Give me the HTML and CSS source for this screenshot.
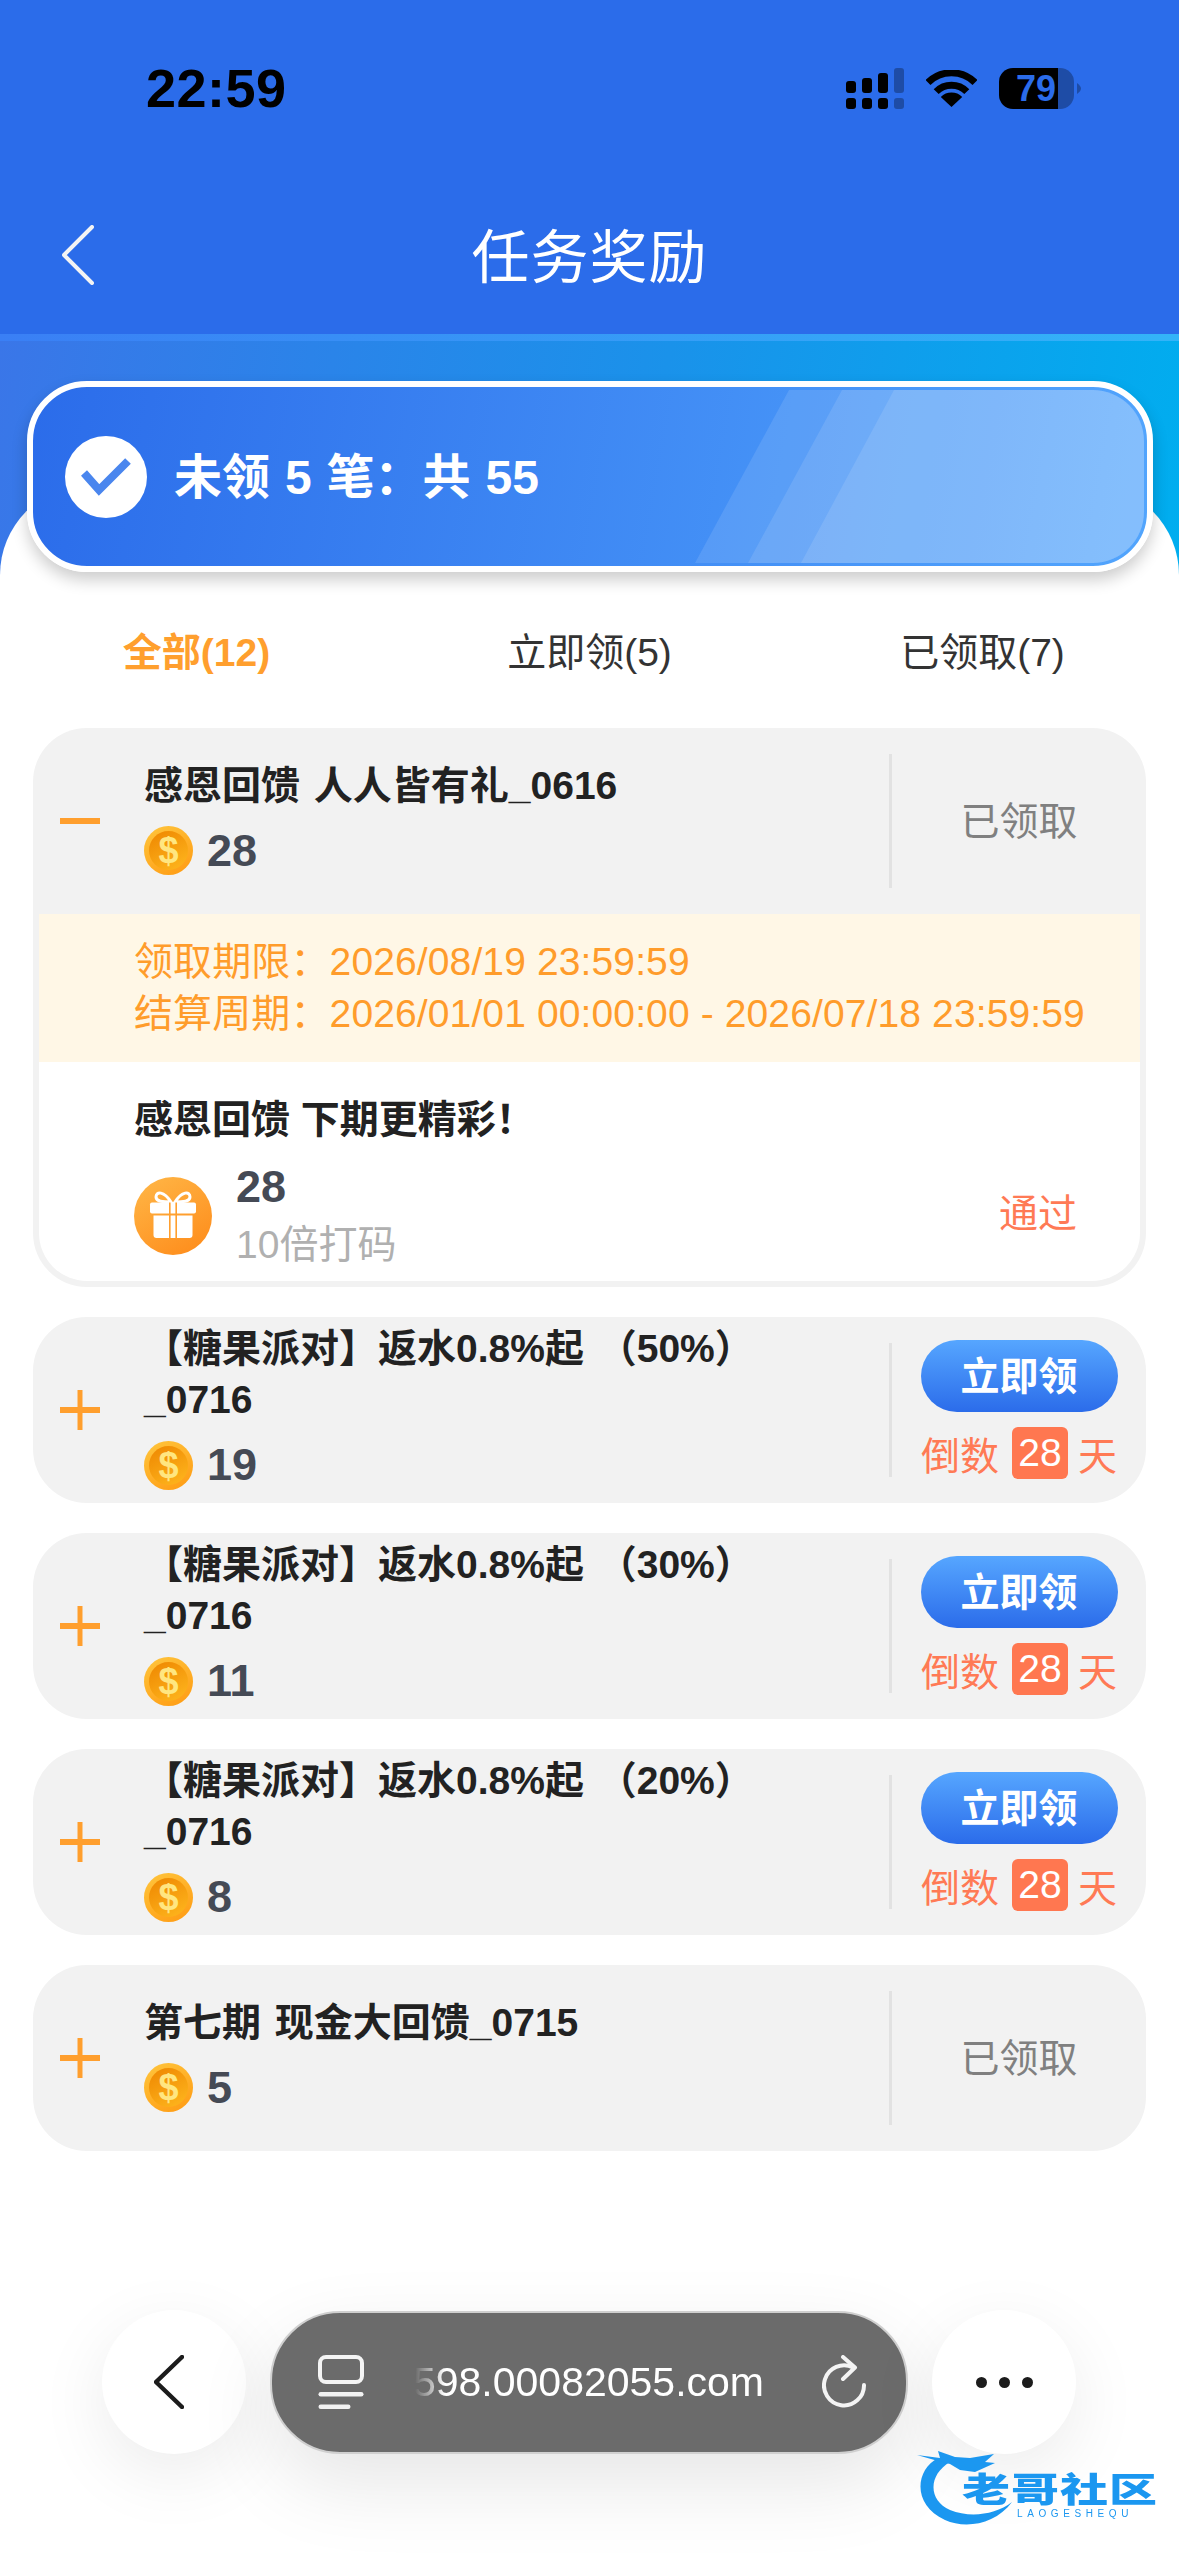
FILE: index.html
```html
<!DOCTYPE html>
<html lang="zh-CN">
<head>
  <meta charset="UTF-8" />
  <meta name="viewport" content="width=device-width, initial-scale=1.0"/>
  <title>任务奖励</title>
  <link rel="stylesheet" href="styles.css">
</head>
<body>

  <!-- shared gradients and the plus icon -->
  <svg class="sprite" aria-hidden="true">
    <defs>
      <linearGradient id="gift-bg" x1="0.2" y1="0" x2="0.8" y2="1">
        <stop offset="0" stop-color="#ffb444"/>
        <stop offset="1" stop-color="#fe8d1c"/>
      </linearGradient>
    </defs>
    <symbol id="plus" viewBox="0 0 40 40">
      <rect x="0" y="17" width="40" height="6" fill="#ff9f2e"/>
      <rect x="17.5" y="0" width="5" height="40" fill="#ff9f2e"/>
    </symbol>
  </svg>

  <div class="page">

    <header class="top">
      <div class="status">
        <span class="time">22:59</span>
        <div class="status-icons">
          <svg width="58" height="41" viewBox="0 0 58 41">
            <rect x="0" y="13" width="10" height="12" rx="3"/>
            <rect x="16" y="10" width="10" height="15" rx="3"/>
            <rect x="32" y="5" width="10" height="20" rx="3"/>
            <rect x="48" y="0" width="10" height="25" rx="3" class="dim"/>
            <rect x="0" y="30" width="10" height="11" rx="3"/>
            <rect x="16" y="30" width="10" height="11" rx="3"/>
            <rect x="32" y="30" width="10" height="11" rx="3"/>
            <rect x="48" y="30" width="10" height="11" rx="3" class="dim"/>
          </svg>
          <svg width="51" height="37" viewBox="0 0 51 37">
            <path d="M2 12.5 A33.4 33.4 0 0 1 49 12.5" class="wifi-arc"/>
            <path d="M10.2 21.6 A21.5 21.5 0 0 1 40.8 21.6" class="wifi-arc"/>
            <path d="M25.5 37 L14.8 27 A15 15 0 0 1 36.2 27 Z"/>
          </svg>
          <svg width="82" height="41" viewBox="0 0 82 41">
            <path d="M59 0 H61 A14 14 0 0 1 75 14 V27 A14 14 0 0 1 61 41 H59 Z" class="dim"/>
            <path d="M59 0 H14 A14 14 0 0 0 0 14 V27 A14 14 0 0 0 14 41 H59 Z"/>
            <path d="M78 15 Q82 18 82 20.5 Q82 23 78 26 Z" class="dim"/>
            <text x="37" y="33" text-anchor="middle" class="battery-num">79</text>
          </svg>
        </div>
      </div>
      <div class="nav">
        <svg class="nav-back" width="32" height="60" viewBox="0 0 32 60">
          <path d="M30 2 L2 30 L30 58" class="line-white"/>
        </svg>
        <h1>任务奖励</h1>
        <span></span>
      </div>
    </header>
    <div class="strip"></div>

    <div class="content">
      <div class="banner">
        <div class="banner-shine">
          <svg width="1108" height="173" viewBox="0 0 1108 173">
            <polygon points="753,0 1108,0 1108,173 659,173"/>
            <polygon points="806,0 1108,0 1108,173 712,173"/>
            <polygon points="858,0 1108,0 1108,173 765,173"/>
          </svg>
        </div>
        <span class="banner-check">
          <svg width="50" height="38" viewBox="0 0 50 38">
            <path d="M3 15 L18 32 L47 3" class="line-check"/>
          </svg>
        </span>
        <span class="banner-text">未领 5 笔：共 55</span>
      </div>

      <div class="sheet">
        <div class="tabs">
          <button class="active">全部(12)</button>
          <button>立即领(5)</button>
          <button>已领取(7)</button>
        </div>

        <div class="list">

          <div class="card">
            <div class="row">
              <svg class="toggle" width="40" height="40" viewBox="0 0 40 40"><rect x="0" y="17" width="40" height="6" fill="#ff9f2e"/></svg>
              <div class="info">
                <div class="name">感恩回馈 人人皆有礼_0616</div>
                <div class="amount"><span class="coin">$</span>28</div>
              </div>
              <div class="side"><span class="claimed">已领取</span></div>
            </div>
            <div class="detail">
              <div class="period">
                <div>领取期限：2026/08/19 23:59:59</div>
                <div>结算周期：2026/01/01 00:00:00 - 2026/07/18 23:59:59</div>
              </div>
              <div class="detail-body">
                <div class="detail-name">感恩回馈 下期更精彩！</div>
                <div class="reward">
                  <svg class="gift" width="78" height="78" viewBox="0 0 78 78">
                    <circle cx="39" cy="39" r="39" fill="url(#gift-bg)"/>
                    <path d="M37 25 C30 14 22 14 22 20 C22 25 30 25 37 25 Z M41 25 C48 14 56 14 56 20 C56 25 48 25 41 25 Z" class="bow"/>
                    <rect x="16" y="25.5" width="46" height="11" rx="2" fill="#fff"/>
                    <path d="M19.5 38.5 H58.5 V58 A3 3 0 0 1 55.5 61 H22.5 A3 3 0 0 1 19.5 58 Z" fill="#fff"/>
                    <rect x="35" y="25.5" width="1.6" height="36" fill="#ff9f2e"/>
                    <rect x="41.4" y="25.5" width="1.6" height="36" fill="#ff9f2e"/>
                  </svg>
                  <div class="reward-text">
                    <div class="reward-num">28</div>
                    <div class="reward-sub">10倍打码</div>
                  </div>
                  <span class="passed">通过</span>
                </div>
              </div>
            </div>
          </div>

          <div class="card">
            <div class="row">
              <svg class="toggle" width="40" height="40"><use href="#plus"/></svg>
              <div class="info">
                <div class="name">【糖果派对】返水0.8%起 （50%）_0716</div>
                <div class="amount"><span class="coin">$</span>19</div>
              </div>
              <div class="side">
                <button class="claim">立即领</button>
                <div class="countdown">倒数<span class="days">28</span>天</div>
              </div>
            </div>
          </div>

          <div class="card">
            <div class="row">
              <svg class="toggle" width="40" height="40"><use href="#plus"/></svg>
              <div class="info">
                <div class="name">【糖果派对】返水0.8%起 （30%）_0716</div>
                <div class="amount"><span class="coin">$</span>11</div>
              </div>
              <div class="side">
                <button class="claim">立即领</button>
                <div class="countdown">倒数<span class="days">28</span>天</div>
              </div>
            </div>
          </div>

          <div class="card">
            <div class="row">
              <svg class="toggle" width="40" height="40"><use href="#plus"/></svg>
              <div class="info">
                <div class="name">【糖果派对】返水0.8%起 （20%）_0716</div>
                <div class="amount"><span class="coin">$</span>8</div>
              </div>
              <div class="side">
                <button class="claim">立即领</button>
                <div class="countdown">倒数<span class="days">28</span>天</div>
              </div>
            </div>
          </div>

          <div class="card">
            <div class="row">
              <svg class="toggle" width="40" height="40"><use href="#plus"/></svg>
              <div class="info">
                <div class="name">第七期 现金大回馈_0715</div>
                <div class="amount"><span class="coin">$</span>5</div>
              </div>
              <div class="side"><span class="claimed">已领取</span></div>
            </div>
          </div>

        </div>
      </div>
    </div>

    <!-- browser toolbar floats over the page -->
    <div class="browser">
      <div class="round">
        <svg class="round-back" width="30" height="54" viewBox="0 0 30 54">
          <path d="M28 2 L2 27 L28 52" class="line-dark"/>
        </svg>
      </div>
      <div class="pill">
        <svg width="46" height="54" viewBox="0 0 46 54">
          <rect x="2" y="2" width="42" height="25" rx="6" class="line-white"/>
          <rect x="0.5" y="37" width="45" height="4.5" rx="2.2" fill="#f2f2f2"/>
          <rect x="0.5" y="49.5" width="32" height="4.5" rx="2.2" fill="#f2f2f2"/>
        </svg>
        <div class="url">598.00082055.com</div>
        <svg width="45" height="54" viewBox="0 0 45 54">
          <path d="M31 12.5 A20 20 0 1 0 42 30" class="line-white"/>
          <path d="M21 2 L33 12.5 L21 24" class="line-white"/>
        </svg>
      </div>
      <div class="round">
        <span class="dots"><i></i><i></i><i></i></span>
      </div>
    </div>

    <div class="watermark">
      <svg width="120" height="100" viewBox="0 0 120 100">
        <path d="M38 28 C15 40 12 75 45 90 C65 99 95 95 112 72 C95 85 70 88 50 80 C28 70 28 45 50 32 Z" fill="#1b97f0"/>
        <path d="M17 25 L40 28 L38 21 L55 27 L70 28 L94 24 L85 32 L95 33 L75 42 L60 40 L50 34 L38 31 Z" fill="#1b97f0"/>
      </svg>
      <span class="wm-name">老哥社区</span>
      <span class="wm-sub">LAOGESHEQU</span>
    </div>

  </div>
</body>
</html>
```

FILE: styles.css
```css
* {
  box-sizing: border-box;
}

body {
  margin: 0;
  background: #fff;
  font-family: "Liberation Sans", "Noto Sans CJK SC", sans-serif;
  color: #222;
}

.sprite {
  position: absolute;
  width: 0;
  height: 0;
}

.page {
  position: relative;
  width: 1179px;
  height: 2556px;
  overflow: hidden;
  display: flex;
  flex-direction: column;
}

/* header */

.top {
  height: 334px;
  background: #2b6cea;
  color: #fff;
}

.status {
  height: 176px;
  padding: 0 98px 0 146px;
  display: flex;
  align-items: center;
  justify-content: space-between;
}

.time {
  font-size: 54px;
  font-weight: bold;
  letter-spacing: 0.5px;
  color: #000;
}

.status-icons {
  display: flex;
  align-items: center;
  gap: 22px;
}

.dim {
  fill: #1e4ca6;
}

.wifi-arc {
  fill: none;
  stroke: #000;
  stroke-width: 7;
}

.battery-num {
  font-family: "Liberation Sans", sans-serif;
  font-size: 36px;
  font-weight: bold;
  fill: #2b6cea;
}

.nav {
  height: 158px;
  display: grid;
  grid-template-columns: 1fr auto 1fr;
  align-items: center;
}

.nav-back {
  margin-left: 62px;
}

.nav h1 {
  margin: 0;
  padding-bottom: 5px;
  font-size: 58px;
  font-weight: normal;
  letter-spacing: 1px;
}

.line-white {
  fill: none;
  stroke: #f4f4f4;
  stroke-width: 4;
  stroke-linecap: round;
  stroke-linejoin: round;
}

.line-dark {
  fill: none;
  stroke: #1c1c1c;
  stroke-width: 4.5;
  stroke-linecap: round;
  stroke-linejoin: round;
}

.strip {
  height: 7px;
  background: linear-gradient(90deg, #3a7ff5, #33b4f8);
}

/* banner and white sheet */

.content {
  flex: 1;
  padding-top: 40px;
  background: linear-gradient(100deg, #3a76e8 0%, #1a92ea 55%, #00aeef 100%) no-repeat;
  background-size: 100% 240px;
}

.banner {
  position: relative;
  z-index: 1;
  height: 191px;
  margin: 0 26px 0 27px;
  padding-left: 32px;
  display: flex;
  align-items: center;
  gap: 27px;
  border: 6px solid #fff;
  border-radius: 60px;
  background: linear-gradient(100deg, #2b6cea 0%, #52a5fd 100%);
  box-shadow: 0 8px 16px rgba(0, 0, 0, 0.2);
  color: #fff;
}

.banner-shine {
  position: absolute;
  top: 3px;
  right: 3px;
  bottom: 3px;
  left: 3px;
  border-radius: 51px;
  overflow: hidden;
}

.banner-shine svg {
  display: block;
}

.banner-shine polygon {
  fill: #fff;
  opacity: 0.11;
}

.banner-check {
  position: relative;
  width: 82px;
  height: 82px;
  border-radius: 50%;
  background: #fff;
  display: flex;
  align-items: center;
  justify-content: center;
}

.line-check {
  fill: none;
  stroke: #4a86ee;
  stroke-width: 8;
}

.banner-text {
  position: relative;
  padding-bottom: 8px;
  font-size: 48px;
  font-weight: bold;
  word-spacing: 1.6px;
}

.sheet {
  margin-top: -87px;
  padding-top: 87px;
  background: #fff;
  border-radius: 90px 90px 0 0;
}

.tabs {
  height: 156px;
  padding-top: 4px;
  display: grid;
  grid-template-columns: 1fr 1fr 1fr;
  align-items: center;
}

.tabs button {
  border: none;
  background: none;
  padding: 0 0 6px;
  font: inherit;
  font-size: 39px;
  color: #333;
}

.tabs button.active {
  color: #ff9f2e;
  font-weight: bold;
}

/* task cards */

.list {
  padding: 0 33px;
  display: flex;
  flex-direction: column;
  gap: 30px;
}

.card {
  border-radius: 54px;
  background: #f2f2f2;
  overflow: hidden;
}

.row {
  height: 186px;
  display: flex;
  align-items: center;
}

.toggle {
  flex: none;
  margin: 0 44px 0 27px;
}

.info {
  flex: 1;
  padding: 0 60px 7px 0;
  display: flex;
  flex-direction: column;
  gap: 15px;
}

.name {
  font-size: 39px;
  line-height: 51px;
  font-weight: bold;
  word-spacing: 3px;
  color: #222;
}

.amount {
  height: 50px;
  display: flex;
  align-items: center;
  gap: 14px;
  font-size: 45px;
  font-weight: bold;
  color: #454a55;
}

.coin {
  flex: none;
  width: 49px;
  height: 49px;
  border: 5px solid transparent;
  border-radius: 50%;
  background: linear-gradient(150deg, #ee8600, #ffb81f) padding-box, linear-gradient(150deg, #ffc63d, #ff9a12) border-box;
  display: flex;
  align-items: center;
  justify-content: center;
  font-size: 36px;
  line-height: 39px;
  color: #ffe680;
}

.side {
  flex: none;
  width: 257px;
  height: 134px;
  border-left: 3px solid #e2e2e2;
  display: flex;
  flex-direction: column;
  align-items: center;
  justify-content: center;
}

.claimed {
  margin-bottom: 6px;
  font-size: 39px;
  color: #808080;
}

.claim {
  flex: none;
  width: 197px;
  height: 72px;
  padding: 0 0 5px;
  border: none;
  border-radius: 36px;
  background: linear-gradient(180deg, #56a6ff, #2b6cea);
  font: inherit;
  font-size: 39px;
  font-weight: bold;
  color: #fff;
}

.countdown {
  flex: none;
  margin-top: 13px;
  display: flex;
  align-items: center;
  font-size: 39px;
  color: #ff7a55;
}

.days {
  width: 56px;
  height: 52px;
  margin: 0 10px 0 13px;
  border-radius: 6px;
  background: #ff7750;
  color: #fff;
  text-align: center;
  line-height: 52px;
}

/* expanded part of the first card */

.detail {
  margin: 0 6px 6px;
  background: #fff;
  border-radius: 0 0 48px 48px;
  overflow: hidden;
}

.period {
  height: 148px;
  padding: 22px 0 0 95px;
  background: #fff7e6;
  font-size: 39px;
  line-height: 52px;
  letter-spacing: 0.12px;
  color: #ff9c2b;
}

.detail-body {
  height: 219px;
  padding: 33px 63px 0 95px;
}

.detail-name {
  font-size: 39px;
  line-height: 50px;
  font-weight: bold;
  color: #222;
}

.reward {
  margin-top: 16px;
  display: flex;
  align-items: center;
  gap: 24px;
}

.gift {
  flex: none;
}

.bow {
  fill: none;
  stroke: #fff;
  stroke-width: 3;
}

.reward-text {
  flex: 1;
}

.reward-num {
  font-size: 45px;
  line-height: 52px;
  font-weight: bold;
  color: #454a55;
}

.reward-sub {
  margin-top: 6px;
  font-size: 39px;
  line-height: 52px;
  color: #b0b0b0;
}

.passed {
  margin-top: -12px;
  font-size: 39px;
  color: #ff7a55;
}

/* browser toolbar */

.browser {
  position: absolute;
  left: 102px;
  bottom: 102px;
  display: flex;
  align-items: center;
  gap: 24px;
}

.round {
  width: 144px;
  height: 144px;
  border-radius: 50%;
  background: #fff;
  box-shadow: 0 20px 70px rgba(0, 0, 0, 0.08);
  display: flex;
  align-items: center;
  justify-content: center;
}

.round-back {
  margin-right: 10px;
}

.dots {
  display: flex;
  gap: 12px;
}

.dots i {
  width: 11px;
  height: 11px;
  border-radius: 50%;
  background: #1c1c1c;
}

.pill {
  width: 638px;
  height: 143px;
  padding: 0 39px 0 46px;
  border: 2px solid #cfcfcf;
  border-radius: 70px;
  background: #6b6b6b;
  box-shadow: 0 30px 80px rgba(0, 0, 0, 0.1);
  display: flex;
  align-items: center;
}

.url {
  flex: 1;
  height: 50px;
  margin: 0 58px 0 45px;
  text-align: right;
  font-size: 41px;
  line-height: 50px;
  white-space: nowrap;
  color: #fff;
  -webkit-mask-image: linear-gradient(90deg, transparent 6px, #000 36px);
  mask-image: linear-gradient(90deg, transparent 6px, #000 36px);
}

/* watermark */

.watermark {
  position: absolute;
  left: 900px;
  top: 2430px;
  width: 279px;
  height: 126px;
  color: #1b97f0;
  filter: blur(0.6px);
}

.wm-name {
  position: absolute;
  left: 62px;
  top: 43px;
  font-size: 48px;
  line-height: 48px;
  font-weight: 900;
  letter-spacing: 1px;
  white-space: nowrap;
  transform: scaleY(0.72);
  transform-origin: left top;
}

.wm-sub {
  position: absolute;
  left: 117px;
  top: 78px;
  font-size: 10px;
  line-height: 12px;
  letter-spacing: 4.6px;
  white-space: nowrap;
}
```
